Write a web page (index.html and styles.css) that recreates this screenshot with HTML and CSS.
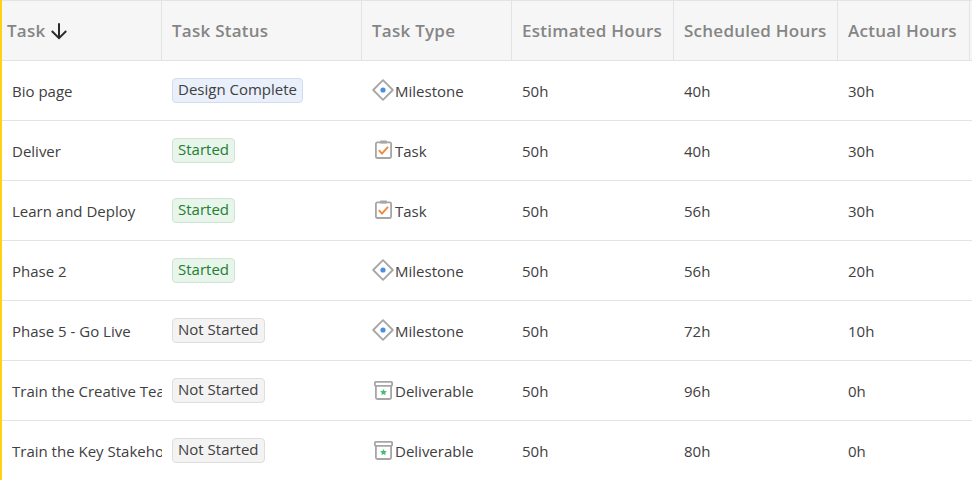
FILE: index.html
```html
<!DOCTYPE html>
<html lang="en">
<head>
<meta charset="utf-8">
<title>Tasks</title>
<link rel="stylesheet" href="styles.css">
</head>
<body>
<svg class="defs" width="0" height="0" aria-hidden="true">
  <symbol id="i-milestone" viewBox="0 0 22 22">
    <path d="M11 1.2 20.8 11 11 20.8 1.2 11Z" fill="none" stroke="#a6a6a6" stroke-width="1.8" stroke-linejoin="round"/>
    <circle cx="11" cy="11" r="2.6" fill="#4a90e2"/>
  </symbol>
  <symbol id="i-task" viewBox="0 0 22 22">
    <rect x="3.9" y="3.4" width="15.2" height="15.6" rx="1.4" fill="none" stroke="#a6a6a6" stroke-width="1.8"/>
    <rect x="8" y="1.6" width="7" height="3" rx=".8" fill="#a6a6a6"/>
    <path d="M6.8 11.2 10 14.6 16 7.8" fill="none" stroke="#f0883e" stroke-width="1.9"/>
  </symbol>
  <symbol id="i-deliverable" viewBox="0 0 22 22">
    <rect x="2.9" y="2.9" width="17.2" height="4" rx=".8" fill="none" stroke="#a6a6a6" stroke-width="1.8"/>
    <path d="M3.9 6.9V18.6a1.4 1.4 0 0 0 1.4 1.4h12.4a1.4 1.4 0 0 0 1.4-1.4V6.9" fill="none" stroke="#a6a6a6" stroke-width="1.8"/>
    <path d="m11.5 10 1 2.1 2.3.2-1.7 1.6.5 2.3-2.1-1.2-2.1 1.2.5-2.3-1.7-1.6 2.3-.2Z" fill="#3fbf6f"/>
  </symbol>
</svg>
<table class="grid">
  <colgroup>
    <col class="c-task"><col class="c-status"><col class="c-type"><col class="c-est"><col class="c-sch"><col class="c-act"><col class="c-end">
  </colgroup>
  <thead>
    <tr>
      <th class="first">Task<svg class="arrow" viewBox="0 0 18 18" width="18" height="18" aria-hidden="true"><path d="M9 1.2v15M1.8 9 9 16.2 16.2 9" fill="none" stroke="#2b2b2b" stroke-width="2"/></svg></th>
      <th>Task Status</th><th>Task Type</th><th>Estimated Hours</th><th>Scheduled Hours</th><th>Actual Hours</th><th></th>
    </tr>
  </thead>
  <tbody>
    <tr><td><div class="name">Bio page</div></td><td><span class="tag blue">Design Complete</span></td><td><div class="type"><svg class="ti"><use href="#i-milestone"/></svg>Milestone</div></td><td>50h</td><td>40h</td><td>30h</td><td></td></tr>
    <tr><td><div class="name">Deliver</div></td><td><span class="tag green">Started</span></td><td><div class="type"><svg class="ti"><use href="#i-task"/></svg>Task</div></td><td>50h</td><td>40h</td><td>30h</td><td></td></tr>
    <tr><td><div class="name">Learn and Deploy</div></td><td><span class="tag green">Started</span></td><td><div class="type"><svg class="ti"><use href="#i-task"/></svg>Task</div></td><td>50h</td><td>56h</td><td>30h</td><td></td></tr>
    <tr><td><div class="name">Phase 2</div></td><td><span class="tag green">Started</span></td><td><div class="type"><svg class="ti"><use href="#i-milestone"/></svg>Milestone</div></td><td>50h</td><td>56h</td><td>20h</td><td></td></tr>
    <tr><td><div class="name">Phase 5 - Go Live</div></td><td><span class="tag grey">Not Started</span></td><td><div class="type"><svg class="ti"><use href="#i-milestone"/></svg>Milestone</div></td><td>50h</td><td>72h</td><td>10h</td><td></td></tr>
    <tr><td><div class="name">Train the Creative Team</div></td><td><span class="tag grey">Not Started</span></td><td><div class="type"><svg class="ti"><use href="#i-deliverable"/></svg>Deliverable</div></td><td>50h</td><td>96h</td><td>0h</td><td></td></tr>
    <tr><td><div class="name">Train the Key Stakeholders</div></td><td><span class="tag grey">Not Started</span></td><td><div class="type"><svg class="ti"><use href="#i-deliverable"/></svg>Deliverable</div></td><td>50h</td><td>80h</td><td>0h</td><td></td></tr>
  </tbody>
</table>
</body>
</html>
```
FILE: styles.css
```css
html, body { margin: 0; padding: 0; background: #fff; overflow: hidden; height: 480px; }
body { font-family: "Open Sans", sans-serif; color: #404040; }
.defs { position: absolute; }
.grid { border-collapse: separate; border-spacing: 0; table-layout: fixed; width: 972px; border-left: 2px solid #fcd116; }
.c-task { width: 160px; }
.c-status { width: 200px; }
.c-type { width: 150px; }
.c-est { width: 162px; }
.c-sch { width: 164px; }
.c-act { width: 132px; }
.c-end { width: 2px; }
th {
  height: 59px; padding: 0 0 0 10px; box-sizing: content-box;
  background: #f6f6f6; border-top: 1px solid #e3e3e3; border-bottom: 1px solid #e3e3e3; border-right: 1px solid #e3e3e3;
  font-size: 17px; font-weight: 600; color: #858585; text-align: left; white-space: nowrap; letter-spacing: .25px; overflow: hidden;
}
th.first { padding-left: 5px; }
th:last-child { border-right: 0; padding: 0; }
.arrow { vertical-align: -3px; margin-left: 5px; }
td { padding: 0 0 0 10px; box-sizing: border-box; height: 60px; border-bottom: 1px solid #e3e3e3; font-size: 15px; white-space: nowrap; overflow: hidden; }
td:last-child { padding: 0; }
tbody tr:last-child td { border-bottom-color: transparent; }
.name { overflow: hidden; }
.tag { display: inline-block; position: relative; top: 0; height: 25px; line-height: 21px; box-sizing: border-box; padding: 0 5px; border: 1px solid; border-radius: 4px; }
.blue { background: #e9effb; border-color: #d3dcee; color: #404040; }
.green { background: #e8f5ea; border-color: #cfe5d3; color: #1e7e34; }
.grey { background: #f3f3f3; border-color: #dedede; color: #404040; }
.type { display: flex; align-items: center; }
.ti { width: 22px; height: 22px; flex: none; position: relative; top: -1px; margin-right: 1px; }
```
